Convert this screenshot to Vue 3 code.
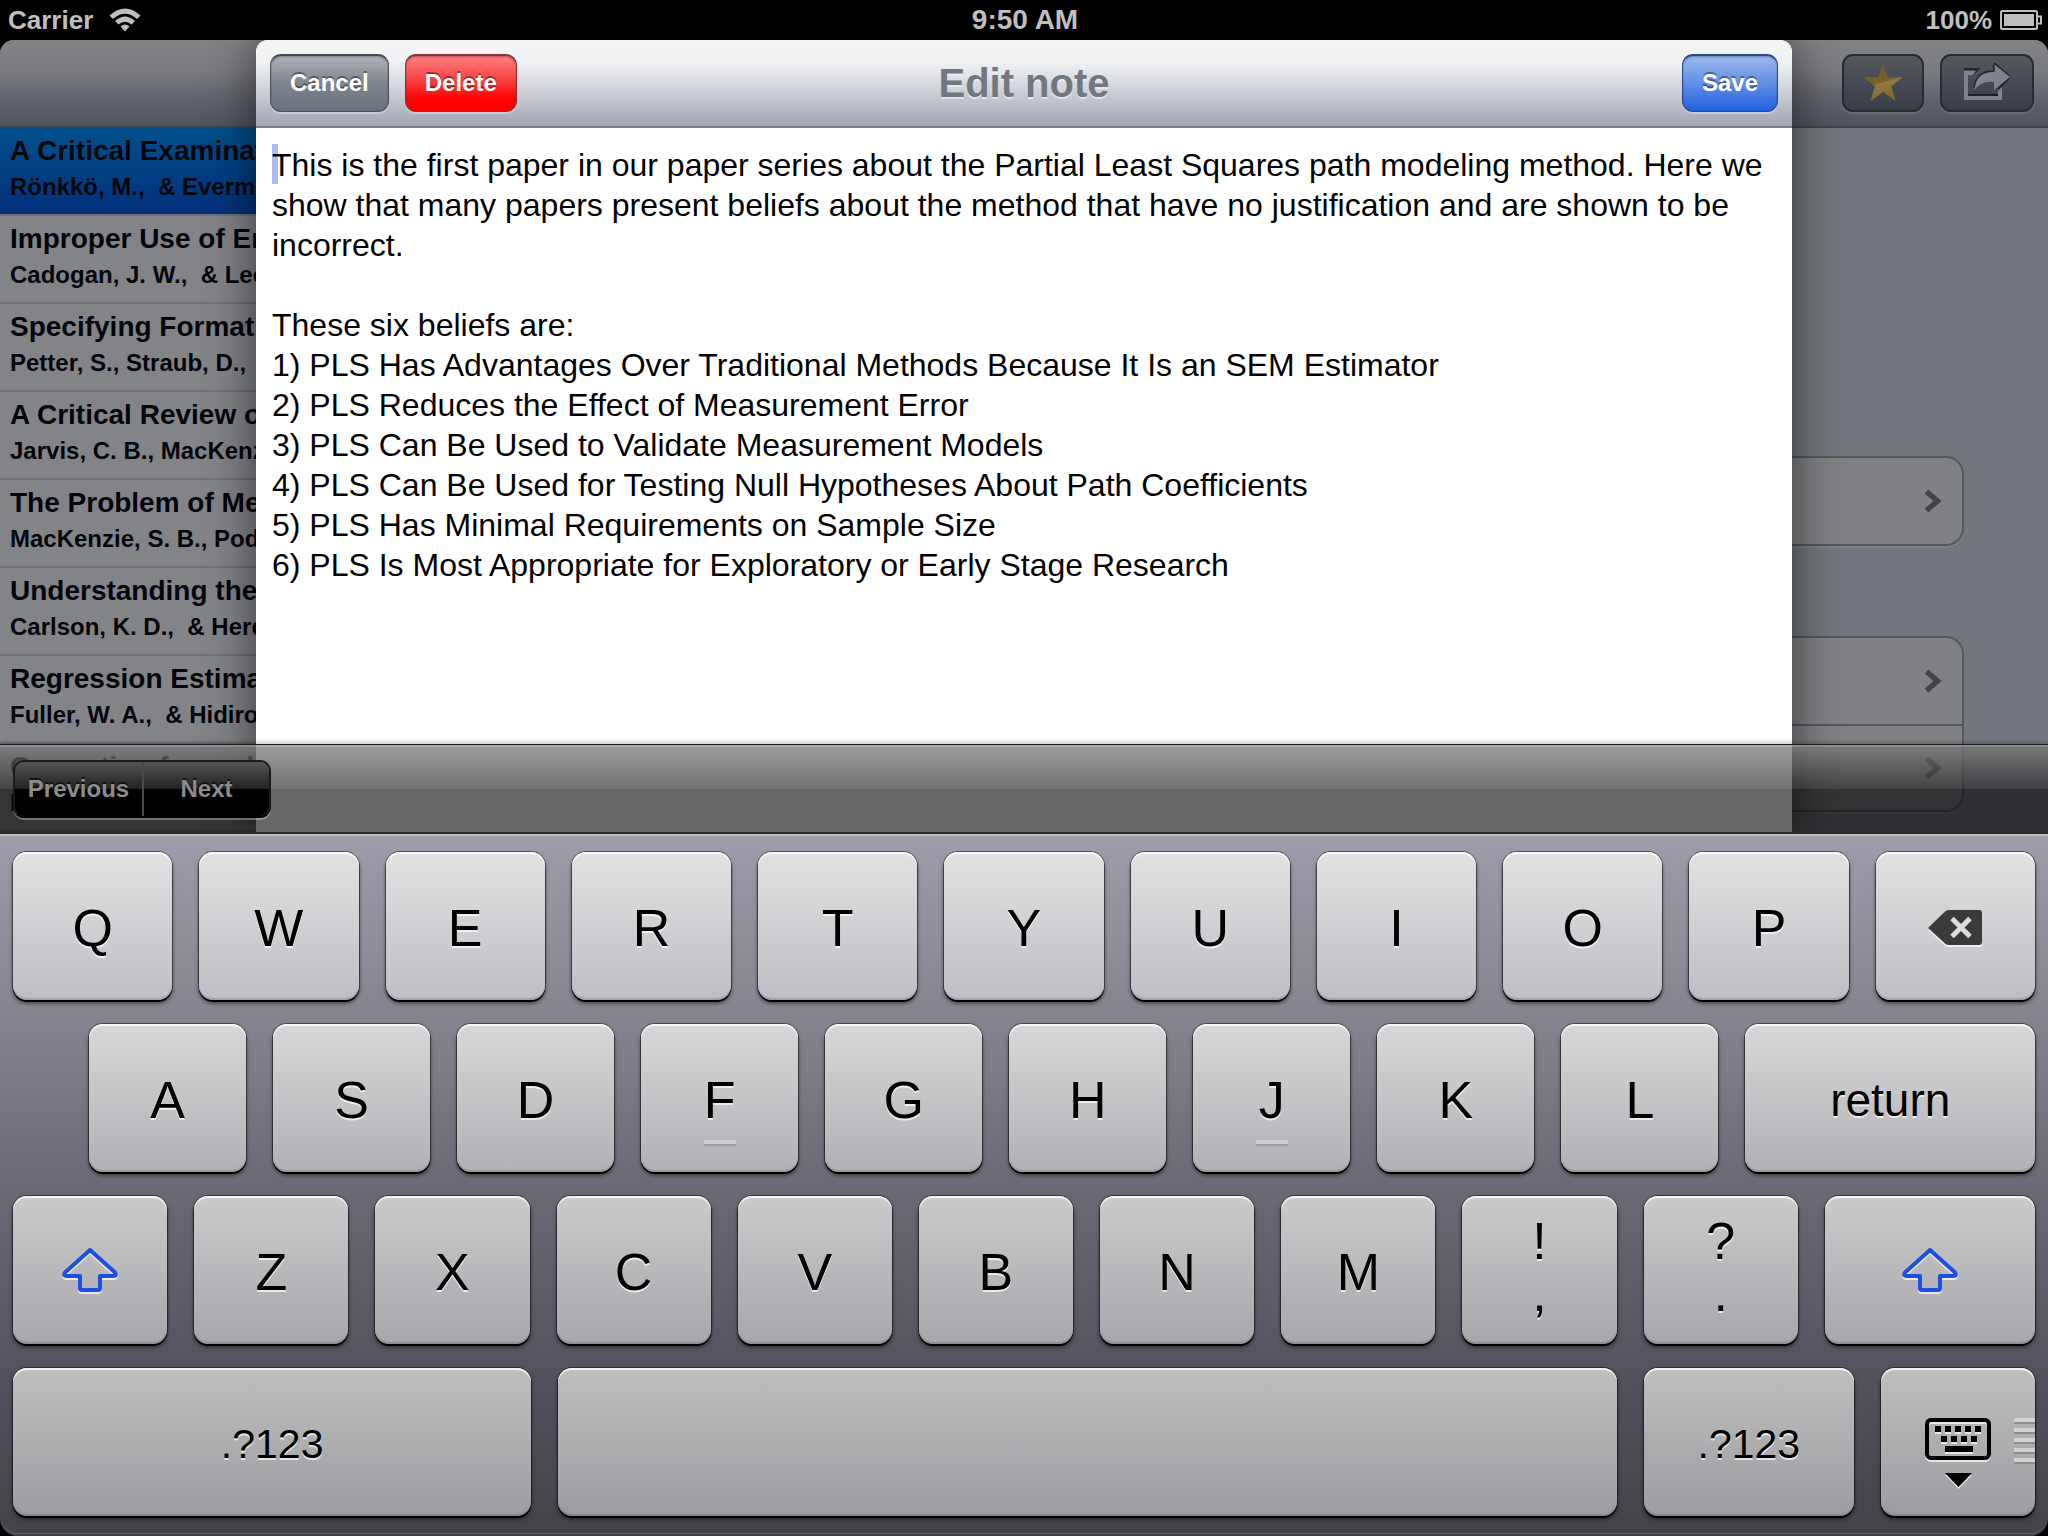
<script setup>
import { ref } from 'vue'

const papers = [
  { title: 'A Critical Examinat', authors: 'Rönkkö, M.,\u00a0 & Everm' },
  { title: 'Improper Use of En', authors: 'Cadogan, J. W.,\u00a0 & Lee' },
  { title: 'Specifying Formati', authors: 'Petter, S., Straub, D.,' },
  { title: 'A Critical Review o', authors: 'Jarvis, C. B., MacKenz' },
  { title: 'The Problem of Me', authors: 'MacKenzie, S. B., Pod' },
  { title: 'Understanding the', authors: 'Carlson, K. D.,\u00a0 & Herd' },
  { title: 'Regression Estima', authors: 'Fuller, W. A.,\u00a0 & Hidiro' },
  { title: 'Correction for mul', authors: 'P' },
]

const note = ref(`This is the first paper in our paper series about the Partial Least Squares path modeling method. Here we show that many papers present beliefs about the method that have no justification and are shown to be incorrect.

These six beliefs are:
1) PLS Has Advantages Over Traditional Methods Because It Is an SEM Estimator
2) PLS Reduces the Effect of Measurement Error
3) PLS Can Be Used to Validate Measurement Models
4) PLS Can Be Used for Testing Null Hypotheses About Path Coefficients
5) PLS Has Minimal Requirements on Sample Size
6) PLS Is Most Appropriate for Exploratory or Early Stage Research`)

const letters = (s) => s.split('').map((c) => ({ label: c, bump: c === 'F' || c === 'J' }))

const rows = [
  [...letters('QWERTYUIOP'), { icon: 'delete', name: 'Delete' }],
  [...letters('ASDFGHJKL'), { label: 'return', kind: 'return' }],
  [
    { icon: 'shift', name: 'Shift', kind: 'shift' },
    ...letters('ZXCVBNM'),
    { pair: ['!', ','] },
    { pair: ['?', '.'] },
    { icon: 'shift', name: 'Right shift', kind: 'shift wide' },
  ],
  [
    { label: '.?123', kind: 'symbols-left' },
    { name: 'Space', kind: 'space' },
    { label: '.?123', kind: 'symbols-right' },
    { icon: 'hide', name: 'Hide keyboard', kind: 'hide' },
  ],
]
</script>

<template>
  <div class="screen">
    <header class="status">
      <div class="status-side">
        <span>Carrier</span>
        <svg width="32" height="24" viewBox="0 0 32 24" aria-hidden="true">
          <path d="M0.5 7.5Q16-6.500 31.500 7.500L28 11Q16 0.500 4 11Z" fill="#bfbfbf" />
          <path d="M6 13Q16 4 26 13L22.500 16.500Q16 11 9.500 16.500Z" fill="#bfbfbf" />
          <path d="M11.500 18.500Q16 14.500 20.500 18.500L16 23.500Z" fill="#bfbfbf" />
        </svg>
      </div>
      <time class="clock">9:50 AM</time>
      <div class="status-side end">
        <span>100%</span>
        <svg width="42" height="20" viewBox="0 0 42 20" aria-hidden="true">
          <rect x="1" y="1" width="36" height="18" rx="1.500" fill="none" stroke="#bfbfbf" stroke-width="2" />
          <rect x="4" y="4" width="30" height="12" fill="#bfbfbf" />
          <path d="M38 6.500H41V13.500H38" fill="none" stroke="#bfbfbf" stroke-width="2" />
        </svg>
      </div>
    </header>

    <main class="stage">
      <div class="back-nav">
        <button class="btn dim-btn star" type="button" aria-label="Favourite">
          <svg width="42" height="40" viewBox="0 0 42 40">
            <defs>
              <linearGradient id="gold" x1="0" y1="0" x2="0.300" y2="1">
                <stop offset="0" stop-color="#6b5a2c" />
                <stop offset="0.580" stop-color="#7a6227" />
                <stop offset="0.620" stop-color="#8d7b42" />
                <stop offset="1" stop-color="#84692a" />
              </linearGradient>
            </defs>
            <path d="M21 0L26 15H42L29.500 24.500L34.500 40L21 30.500L8 40L12.500 24.500L0 15H16Z" fill="url(#gold)" />
          </svg>
        </button>
        <button class="btn dim-btn share" type="button" aria-label="Share">
          <svg width="46" height="38" viewBox="0 0 46 38">
            <path d="M0 6H14L10 10M30 0L46 14L34 26" fill="none" stroke="#23262c" stroke-width="2" />
            <path d="M0 8H12L8 12H4V33H34V28L38 24V37H0Z" fill="#818388" />
            <path d="M4 32H34" stroke="#1d2025" stroke-width="2" />
            <path d="M30 1L46 14L30 27V19Q18 17 10 27Q11 9 30 9Z" fill="#818388" />
            <path d="M10 25Q12 8 30 8V1" fill="none" stroke="#23262c" stroke-width="1.500" />
          </svg>
        </button>
      </div>
      <div class="columns">
        <ul class="papers">
          <li v-for="(p, i) in papers" :key="i" :class="{ selected: i === 0 }">
            <strong>{{ p.title }}</strong>
            <span>{{ p.authors }}</span>
          </li>
        </ul>
        <section class="detail">
          <div v-for="n in 2" :key="n" class="card">
            <div v-for="m in n" :key="m" class="cell">
              <svg width="18" height="24" viewBox="0 0 18 24" aria-hidden="true">
                <path d="M2.500 2.500L13.500 12L2.500 21.500" fill="none" stroke="#434448" stroke-width="5.500" />
              </svg>
            </div>
          </div>
        </section>
      </div>

      <section class="modal" aria-labelledby="modal-title">
        <div class="modal-nav">
          <div class="nav-side">
            <button class="btn cancel" type="button">Cancel</button>
            <button class="btn delete" type="button">Delete</button>
          </div>
          <h1 id="modal-title">Edit note</h1>
          <div class="nav-side end">
            <button class="btn save" type="button">Save</button>
          </div>
        </div>
        <div class="editor">
          <textarea v-model="note" aria-label="Note" spellcheck="false"></textarea>
        </div>
      </section>

      <div class="accessory">
        <div class="segmented">
          <button type="button">Previous</button>
          <button type="button">Next</button>
        </div>
      </div>
    </main>

    <div class="keyboard">
      <div v-for="(row, r) in rows" :key="r" class="row" :class="'row-' + (r + 1)">
        <button
          v-for="(k, i) in row"
          :key="i"
          type="button"
          class="key"
          :class="[k.kind, { bump: k.bump, pair: k.pair }]"
          :aria-label="k.name"
        >
          <template v-if="k.pair"><span v-for="c in k.pair" :key="c">{{ c }}</span></template>
          <template v-else-if="k.label">{{ k.label }}</template>
          <svg v-else-if="k.icon === 'delete'" class="etched" width="54" height="36" viewBox="0 0 54 36">
            <path d="M0 18L17 1.500Q18.500 0 21 0H51Q54 0 54 3V32Q54 35 51 35H21Q18.500 35 17 33.500Z" fill="#3a3a3a" />
            <path d="M24 8.500L42 26.500M42 8.500L24 26.500" stroke="#dcdcde" stroke-width="5" />
          </svg>
          <svg v-else-if="k.icon === 'shift'" class="etched" width="56" height="46" viewBox="0 0 56 46">
            <path
              d="M28 3L53 25.500Q55 29 51.500 29H38V41Q38 43 36 43H20Q18 43 18 41V29H4.500Q1 29 3 25.500Z"
              fill="none" stroke="#1b50e0" stroke-width="4" stroke-linejoin="round"
            />
          </svg>
          <svg v-else-if="k.icon === 'hide'" class="etched" width="66" height="90" viewBox="0 0 66 90">
            <rect x="2" y="23" width="62" height="38" rx="4" fill="none" stroke="#000" stroke-width="4" />
            <path d="M10 32H56" stroke="#000" stroke-width="6" stroke-dasharray="6 4" />
            <path d="M16 42H52" stroke="#000" stroke-width="6" stroke-dasharray="6 4" />
            <path d="M20 52H48" stroke="#000" stroke-width="6" />
            <path d="M20 76H47L33.500 90Z" />
          </svg>
        </button>
      </div>
    </div>
  </div>
</template>

<style>
body {
  margin: 0;
  background: #000;
}
</style>

<style scoped>
* {
  box-sizing: border-box;
}
.screen {
  min-height: 100vh;
  display: flex;
  flex-direction: column;
  overflow: hidden;
  background: #000;
  font-family: "Liberation Sans", Arial, Helvetica, sans-serif;
}
button {
  font-family: inherit;
  margin: 0;
}

.status {
  height: 40px;
  display: flex;
  align-items: center;
  padding: 0 6px 0 8px;
  color: #bfbfbf;
  font-size: 26px;
  font-weight: bold;
}
.status-side {
  flex: 1;
  display: flex;
  align-items: center;
  gap: 16px;
}
.status-side.end {
  justify-content: flex-end;
  gap: 8px;
}
.clock {
  font-size: 28px;
}

.stage {
  position: relative;
  flex: 1;
  display: flex;
  flex-direction: column;
  overflow: hidden;
  border-radius: 14px 14px 0 0;
  background: #73777d;
}
.back-nav {
  height: 88px;
  display: flex;
  align-items: center;
  justify-content: flex-end;
  gap: 16px;
  padding: 0 14px;
  border-bottom: 2px solid #42434e;
  background: linear-gradient(#828386, #7b7c80 35%, #64666e 65%, #50535c);
}
.btn {
  height: 58px;
  display: flex;
  align-items: center;
  justify-content: center;
  padding: 0 19px 2px;
  border: 1px solid #4d5259;
  border-top: 2px solid #45484d;
  border-radius: 11px;
  color: #fff;
  font-size: 24px;
  font-weight: bold;
  line-height: 28px;
  text-shadow: 0 -2px 0 rgba(0, 0, 0, 0.4);
  box-shadow: 0 2px 0 rgba(255, 255, 255, 0.3), inset 0 1px 2px rgba(0, 0, 0, 0.3);
}
.dim-btn {
  border: 2px solid #282b31;
  background: linear-gradient(#55585d, #454a53 50%, #3a3e48);
  box-shadow: 0 2px 0 rgba(255, 255, 255, 0.1);
}
.star {
  width: 82px;
}
.share {
  width: 94px;
}

.columns {
  flex: 1;
  display: flex;
}
.papers {
  width: 31.25%;
  margin: 0;
  padding: 0;
  list-style: none;
  background: #828488;
}
.papers li {
  height: 88px;
  display: flex;
  flex-direction: column;
  padding: 5px 10px;
  border-bottom: 2px solid #717276;
  color: #04060c;
  white-space: nowrap;
}
.papers li.selected {
  background: linear-gradient(#02508a, #022f7b);
}
.papers strong {
  font-size: 28px;
  line-height: 36px;
}
.papers span {
  font-size: 24px;
  font-weight: bold;
  line-height: 36px;
}
.detail {
  flex: 1;
  display: flex;
  flex-direction: column;
  gap: 90px;
  padding: 328px 84px 0;
}
.card {
  border: 2px solid #56585c;
  border-radius: 18px;
  background: #808184;
  box-shadow: 0 2px 0 rgba(255, 255, 255, 0.08);
}
.cell {
  height: 86px;
  display: flex;
  align-items: center;
  justify-content: flex-end;
  padding-right: 20px;
}
.cell + .cell {
  border-top: 2px solid #56585c;
}

.modal {
  position: absolute;
  inset: 0 12.5%;
  display: flex;
  flex-direction: column;
  border-radius: 12px 12px 0 0;
  background: #fff;
  box-shadow: 0 0 48px rgba(0, 0, 0, 0.6);
}
.modal-nav {
  height: 88px;
  display: flex;
  align-items: center;
  padding: 0 14px;
  border-bottom: 2px solid #7b7d90;
  border-radius: 12px 12px 0 0;
  background: linear-gradient(#f4f5f7, #f1f2f4 25%, #d3d5dc 55%, #a2a5b3);
}
.nav-side {
  flex: 1;
  display: flex;
  gap: 16px;
}
.nav-side.end {
  justify-content: flex-end;
}
h1 {
  margin: 0;
  color: #717880;
  font-size: 40px;
  line-height: 48px;
  text-shadow: 0 2px 0 rgba(255, 255, 255, 0.5);
}
.cancel {
  background: linear-gradient(#b0b2b8, #7d848d 50%, #6a727e);
}
.delete {
  border-color: #8f3038;
  background: linear-gradient(#ff8080, #f94040 45%, #fd0606 75%, #f00);
}
.save {
  border-color: #2a4a8c;
  background: linear-gradient(#9db9ec, #5f8fe6 50%, #2160dd);
}
.editor {
  position: relative;
  flex: 1;
  display: flex;
}
.editor::before {
  content: "";
  position: absolute;
  left: 16px;
  top: 16px;
  width: 6px;
  height: 40px;
  background: #aabdf8;
}
textarea {
  position: relative;
  flex: 1;
  padding: 17px 16px;
  border: 0;
  outline: 0;
  resize: none;
  overflow: hidden;
  background: transparent;
  color: #000;
  font-family: inherit;
  font-size: 32px;
  line-height: 40px;
}

.accessory {
  position: absolute;
  left: 0;
  right: 0;
  bottom: 0;
  height: 90px;
  display: flex;
  align-items: center;
  padding: 0 13px;
  border-top: 1px solid #1c1c1c;
  border-bottom: 2px solid #2d2d2f;
  background:
    linear-gradient(rgba(255, 255, 255, 0.36), rgba(255, 255, 255, 0.08)) top / 100% 44px no-repeat,
    rgba(0, 0, 0, 0.6);
  box-shadow: 0 -2px 4px rgba(0, 0, 0, 0.2), inset 0 2px 0 rgba(255, 255, 255, 0.15);
}
.segmented {
  display: flex;
  border-radius: 11px;
  overflow: hidden;
  border: 2px solid #1a1a1a;
  border-bottom-color: #000;
  box-shadow: 0 2px 0 rgba(255, 255, 255, 0.3);
}
.segmented button {
  width: 127px;
  height: 54px;
  padding: 0;
  border: 0;
  background: linear-gradient(#555, #222 50%, #000 50%);
  color: #8c8c8c;
  font-size: 24px;
  font-weight: bold;
  text-shadow: 0 -2px 0 rgba(0, 0, 0, 0.6);
}
.segmented button + button {
  border-left: 2px solid #4a4a4a;
}

.keyboard {
  display: flex;
  flex-direction: column;
  gap: 24px;
  padding: 16px 13px 20px;
  border-top: 2px solid #bdbdbf;
  border-radius: 0 0 18px 18px;
  background: linear-gradient(#9f9ca9, #86848f 25%, #6a6973 51%, #555560 74%, #424249);
  box-shadow: inset 0 -2px 0 rgba(0, 0, 0, 0.3), inset 0 -3px 0 rgba(255, 255, 255, 0.15);
}
.row {
  display: flex;
  gap: 27px;
}
.row-2 {
  padding-left: 76px;
}
.key {
  position: relative;
  flex: 154 1 0;
  min-width: 0;
  height: 148px;
  display: flex;
  flex-direction: column;
  align-items: center;
  justify-content: center;
  padding: 4px 0 0;
  border: 0;
  border-radius: 14px;
  color: #000;
  font-size: 52px;
  line-height: 60px;
  text-shadow: 0 2px 0 rgba(255, 255, 255, 0.7);
  box-shadow:
    inset 0 2px 1px rgba(255, 255, 255, 0.8),
    inset 0 -2px 1px rgba(0, 0, 0, 0.15),
    0 2px 0 #000,
    0 0 0 1px rgba(0, 0, 0, 0.45),
    0 3px 4px rgba(0, 0, 0, 0.6);
}
.row-1 .key {
  background: linear-gradient(#e2e2e3, #bfbec4);
}
.row-2 .key {
  background: linear-gradient(#d8d8d9, #b2b1b6);
}
.row-3 .key {
  background: linear-gradient(#cbcbcc, #a7a6ab);
}
.row-4 .key {
  background: linear-gradient(#bfbfc0, #9d9ca1);
}
.key.return {
  flex-grow: 284;
  font-size: 46px;
}
.key.shift,
.key.hide {
  padding: 0;
}
.key.wide {
  flex-grow: 210;
}
.key.symbols-left {
  flex-grow: 518;
}
.key.space {
  flex-grow: 1058;
}
.key.symbols-right {
  flex-grow: 210;
}
.key.symbols-left,
.key.symbols-right {
  font-size: 41px;
}
.key.pair {
  padding: 0 0 6px;
  line-height: 52px;
}
.etched {
  display: block;
  overflow: visible;
  filter: drop-shadow(0 2px 0 rgba(255, 255, 255, 0.7));
}
.bump::after {
  content: "";
  position: absolute;
  bottom: 28px;
  width: 32px;
  height: 4px;
  background: #cfcfd2;
  box-shadow: 0 2px 1px rgba(0, 0, 0, 0.15);
}
.hide::after {
  content: "";
  position: absolute;
  right: 0;
  top: 50px;
  width: 21px;
  height: 47px;
  background: repeating-linear-gradient(#d2d2d3 0 4px, #8d8d90 4px 6px, transparent 6px 10px);
}
</style>
